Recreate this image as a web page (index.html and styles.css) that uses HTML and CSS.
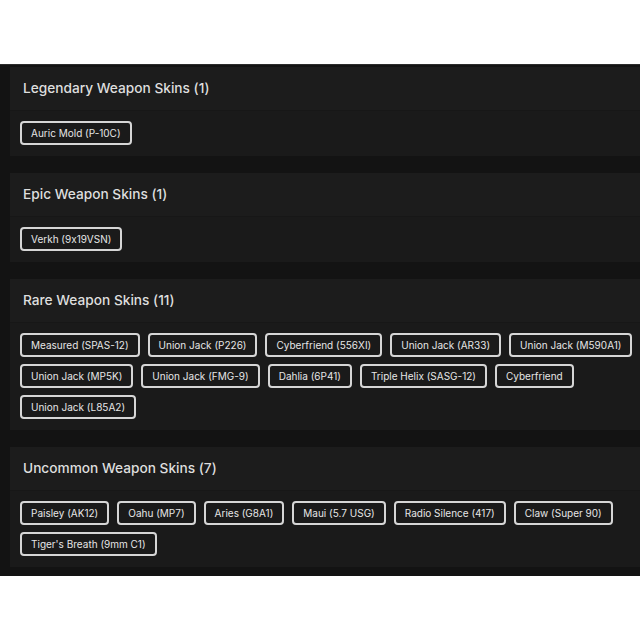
FILE: index.html
```html
<!DOCTYPE html>
<html lang="en">
<head>
    <meta charset="UTF-8">
    <meta name="viewport" content="width=device-width, initial-scale=1.0">
    <title>Weapon Skins</title>
    <link rel="stylesheet" href="styles.css">
</head>
<body>
    <div class="skins">
        <section class="card">
            <h2 class="card-title">Legendary Weapon Skins (1)</h2>
            <div class="chips">
                <span class="chip">Auric Mold (P-10C)</span>
            </div>
        </section>

        <section class="card">
            <h2 class="card-title">Epic Weapon Skins (1)</h2>
            <div class="chips">
                <span class="chip">Verkh (9x19VSN)</span>
            </div>
        </section>

        <section class="card">
            <h2 class="card-title">Rare Weapon Skins (11)</h2>
            <div class="chips">
                <span class="chip">Measured (SPAS-12)</span>
                <span class="chip">Union Jack (P226)</span>
                <span class="chip">Cyberfriend (556XI)</span>
                <span class="chip">Union Jack (AR33)</span>
                <span class="chip">Union Jack (M590A1)</span>
                <span class="chip">Union Jack (MP5K)</span>
                <span class="chip">Union Jack (FMG-9)</span>
                <span class="chip">Dahlia (6P41)</span>
                <span class="chip">Triple Helix (SASG-12)</span>
                <span class="chip">Cyberfriend</span>
                <span class="chip">Union Jack (L85A2)</span>
            </div>
        </section>

        <section class="card">
            <h2 class="card-title">Uncommon Weapon Skins (7)</h2>
            <div class="chips">
                <span class="chip">Paisley (AK12)</span>
                <span class="chip">Oahu (MP7)</span>
                <span class="chip">Aries (G8A1)</span>
                <span class="chip">Maui (5.7 USG)</span>
                <span class="chip">Radio Silence (417)</span>
                <span class="chip">Claw (Super 90)</span>
                <span class="chip">Tiger's Breath (9mm C1)</span>
            </div>
        </section>
    </div>
</body>
</html>
```

FILE: styles.css
```css
html, body {
    overflow: hidden;
}
body {
    margin: 0;
    background-color: #ffffff;
    font-family: Inter, 'Open Sans', sans-serif;
    font-feature-settings: "calt" 0;
    color: #e0e0e0;
}
.skins {
    margin-top: 64px;
    width: 650px;
    padding: 2px 0 9px 10px;
    background-color: #131313;
    border-top: 1px solid #2c2c2c;
}
.card {
    background-color: #1c1c1c;
    margin-bottom: 17px;
}
.card:last-child {
    margin-bottom: 0;
}
.card-title {
    margin: 0;
    padding: 11px 13px 12px;
    font-size: 13.7px;
    font-weight: 500;
    line-height: 20px;
    color: #dedede;
    border-bottom: 1px solid #171717;
}
.chips {
    display: flex;
    flex-wrap: wrap;
    gap: 7px 8px;
    padding: 10px 10px 11px;
    background-color: #1a1a1a;
}
.chip {
    display: inline-block;
    padding: 3px 9px;
    border: 2px solid #d6d6d6;
    border-radius: 4px;
    font-size: 10px;
    line-height: 14px;
    color: #e6e6e6;
}
```
